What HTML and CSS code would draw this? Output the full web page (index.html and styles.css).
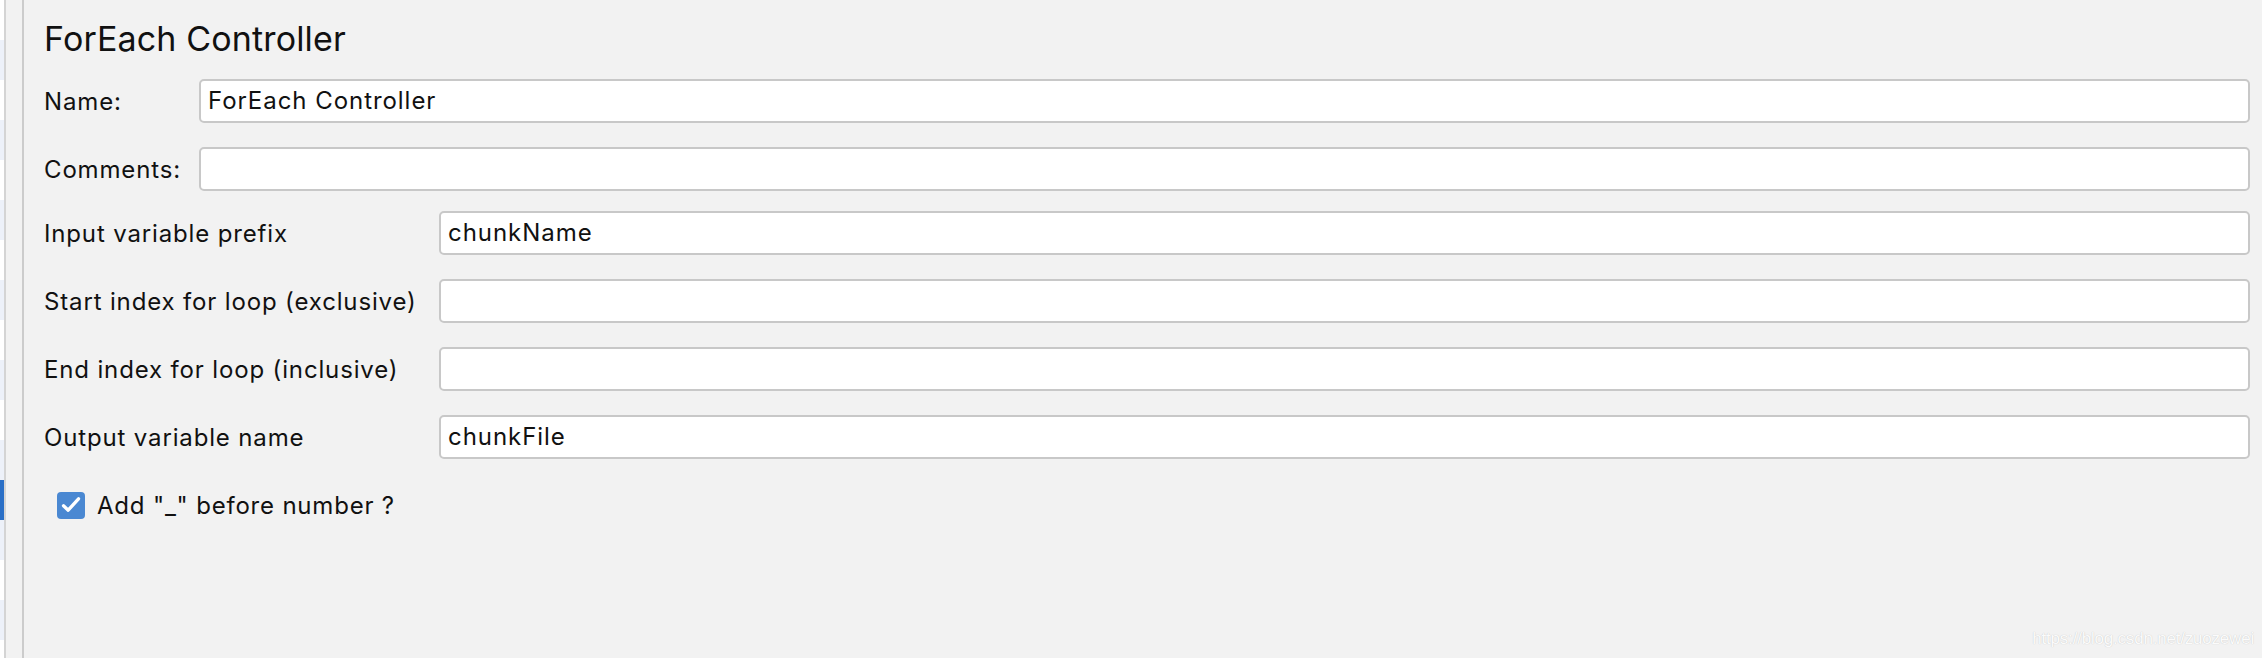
FILE: index.html
```html
<!DOCTYPE html>
<html>
<head>
<meta charset="utf-8">
<link rel="stylesheet" href="styles.css">
</head>
<body>
<div class="tree">
  <div class="row"></div><div class="row"></div><div class="row"></div><div class="row"></div>
  <div class="row"></div><div class="row"></div><div class="row"></div><div class="row"></div>
  <div class="row"></div><div class="row"></div><div class="row"></div><div class="row"></div>
  <div class="row selected"></div><div class="row"></div><div class="row"></div><div class="row"></div>
  <div class="row"></div>
</div>
<div class="gutter"></div>
<main class="panel">
  <h1 class="title">ForEach Controller</h1>
  <div class="form form-top">
    <label class="label">Name:</label>
    <div class="field">ForEach Controller</div>
    <label class="label">Comments:</label>
    <div class="field"></div>
  </div>
  <div class="form form-main">
    <label class="label">Input variable prefix</label>
    <div class="field">chunkName</div>
    <label class="label">Start index for loop (exclusive)</label>
    <div class="field"></div>
    <label class="label">End index for loop (inclusive)</label>
    <div class="field"></div>
    <label class="label">Output variable name</label>
    <div class="field">chunkFile</div>
  </div>
  <div class="check-row">
    <span class="checkbox">
      <svg viewBox="0 0 28 27" width="28" height="27"><path d="M6.5 13.8 L11.2 18.2 L21.5 6.8" fill="none" stroke="#fff" stroke-width="3.3" stroke-linecap="round" stroke-linejoin="round"/></svg>
    </span>
    <span class="check-label">Add "_" before number ?</span>
  </div>
  <div class="watermark">https://blog.csdn.net/zuozewei</div>
</main>
</body>
</html>
```
FILE: styles.css
```css
html, body {
  margin: 0;
  padding: 0;
}
body {
  width: 2262px;
  height: 658px;
  overflow: hidden;
  display: flex;
  background: #f2f2f2;
  font-family: "Inter", "Noto Sans", sans-serif;
  color: #111;
}
.tree {
  width: 4px;
  border-right: 2px solid #d4d4d4;
  display: flex;
  flex-direction: column;
  flex: none;
  overflow: hidden;
}
.row {
  height: 40px;
  flex: none;
  background: #ffffff;
}
.row:nth-child(even) {
  background: #edf1f9;
}
.row.selected {
  background: #2a6fc6;
}
.gutter {
  width: 16px;
  flex: none;
  background: #f2f2f2;
  border-right: 2px solid #cccccc;
}
.panel {
  position: relative;
  flex: 1;
  padding: 17px 12px 0 20px;
  display: flex;
  flex-direction: column;
}
.title {
  margin: 0 0 18px 0;
  font-size: 34px;
  line-height: 44px;
  font-weight: 400;
  letter-spacing: 0.15px;
  color: #111;
}
.form {
  display: grid;
  row-gap: 24px;
  align-items: center;
}
.form-top {
  grid-template-columns: 155px 1fr;
}
.form-main {
  margin-top: 20px;
  grid-template-columns: 395px 1fr;
}
.label {
  font-size: 24px;
  letter-spacing: 0.85px;
  white-space: nowrap;
}
.field {
  height: 44px;
  box-sizing: border-box;
  background: #fff;
  border: 2px solid #c8c8c8;
  border-radius: 5px;
  padding: 0 7px;
  font-size: 24px;
  letter-spacing: 0.95px;
  line-height: 40px;
}
.check-row {
  margin-top: 32px;
  margin-left: 13px;
  display: flex;
  align-items: center;
  gap: 12px;
  height: 28px;
}
.checkbox {
  width: 28px;
  height: 27px;
  border-radius: 4px;
  background: #4a88d2;
  display: flex;
}
.check-label {
  font-size: 24px;
  letter-spacing: 0.8px;
}
.watermark {
  position: absolute;
  right: 8px;
  bottom: 9px;
  font-family: "Liberation Sans", Arial, sans-serif;
  font-size: 17px;
  letter-spacing: -0.2px;
  color: #fbfbfb;
  text-shadow: 0 0 1px rgba(0, 0, 0, 0.22);
}
```
